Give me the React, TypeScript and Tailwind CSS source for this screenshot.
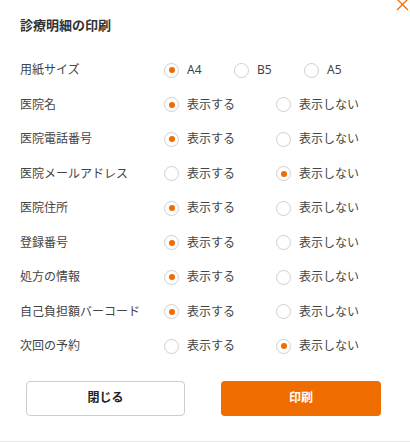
import { useState } from 'react'

type Option = { value: string, label: string }
type Row = { key: string, label: string, options: Option[], wide: boolean }

const showHide: Option[] = [
    { value: 'show', label: '表示する' },
    { value: 'hide', label: '表示しない' },
]

const rows: Row[] = [
    { key: 'paper', label: '用紙サイズ', wide: false, options: [
        { value: 'A4', label: 'A4' },
        { value: 'B5', label: 'B5' },
        { value: 'A5', label: 'A5' },
    ] },
    { key: 'name', label: '医院名', wide: true, options: showHide },
    { key: 'tel', label: '医院電話番号', wide: true, options: showHide },
    { key: 'mail', label: '医院メールアドレス', wide: true, options: showHide },
    { key: 'address', label: '医院住所', wide: true, options: showHide },
    { key: 'reg', label: '登録番号', wide: true, options: showHide },
    { key: 'rx', label: '処方の情報', wide: true, options: showHide },
    { key: 'barcode', label: '自己負担額バーコード', wide: true, options: showHide },
    { key: 'next', label: '次回の予約', wide: true, options: showHide },
]

const initial: Record<string, string> = {
    paper: 'A4',
    name: 'show',
    tel: 'show',
    mail: 'hide',
    address: 'show',
    reg: 'show',
    rx: 'show',
    barcode: 'show',
    next: 'hide',
}

export default function App(){
    const [values, setValues] = useState<Record<string, string>>(initial)

    return <>
    <div className="relative w-[410px] h-[442px] bg-white border-b border-[#e5e5e5] text-[#333] font-['Noto_Sans','Noto_Sans_CJK_JP',sans-serif] overflow-hidden">
        {/* close icon */}
        <button className="absolute top-[-2px] left-[396px] w-[13px] h-[13px]">
            <svg viewBox="0 0 13 13" className="w-[13px] h-[13px]">
                <path d="M1 1 L12 12 M12 1 L1 12" stroke="#ef6c00" strokeWidth="1.3" fill="none"/>
            </svg>
        </button>

        <h1 className="pl-[20px] pt-[15px] text-[13px] leading-[20px] font-bold text-[#333]">診療明細の印刷</h1>

        {/* rows */}
        <div className="flex flex-col pt-[18px] pl-[20px]">
            {rows.map(row => (
                <div key={row.key} className="flex flex-row items-center h-[34.5px]">
                    <p className="w-[144px] text-[12px] text-[#444]">{row.label}</p>
                    {row.options.map(opt => {
                        const checked = values[row.key] === opt.value
                        return (
                            <label key={opt.value} onClick={() => setValues({ ...values, [row.key]: opt.value })}
                                className={"flex flex-row items-center cursor-pointer " + (row.wide ? "w-[112px]" : "w-[70px]")}>
                                <span className="w-[15px] h-[15px] rounded-full border border-[#cfcfcf] flex items-center justify-center flex-shrink-0">
                                    {checked && <span className="w-[6px] h-[6px] rounded-full bg-[#ef6c00]"></span>}
                                </span>
                                <span className="ml-[8px] text-[12px] text-[#444]">{opt.label}</span>
                            </label>
                        )
                    })}
                </div>
            ))}
        </div>

        {/* buttons */}
        <div className="flex flex-row gap-[36px] pl-[26px] pt-[17px]">
            <button className="w-[159px] h-[35px] border border-[#cccccc] rounded-[4px] bg-white text-[12px] font-bold text-[#222]">
                閉じる
            </button>
            <button className="w-[160px] h-[35px] rounded-[4px] bg-[#ef6c00] text-[12px] font-bold text-white">
                印刷
            </button>
        </div>
    </div>
    </>
}
